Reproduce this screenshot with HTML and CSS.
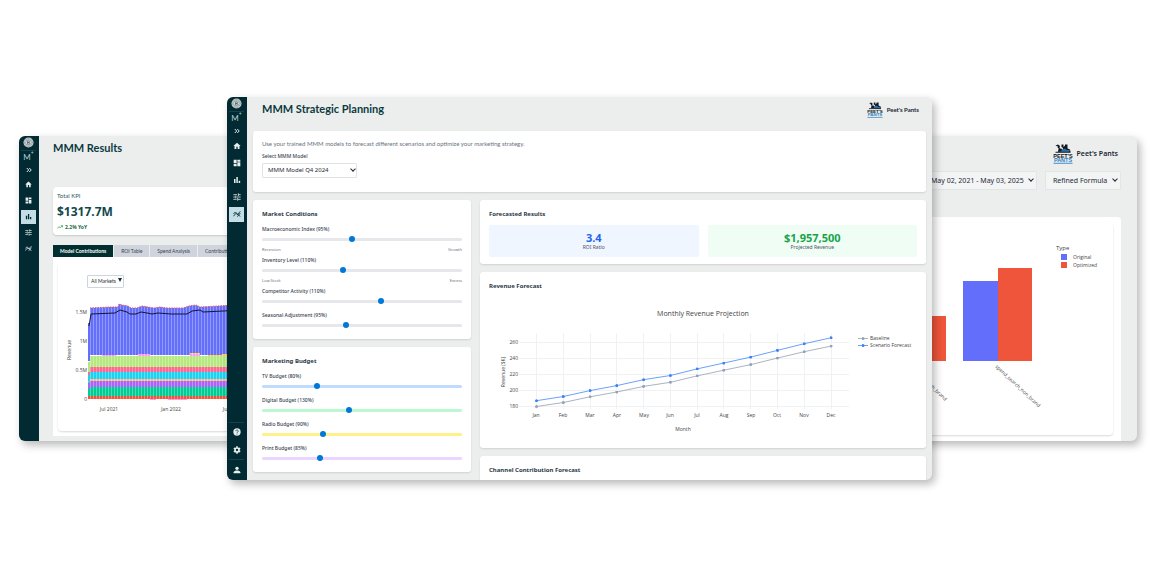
FILE: index.html
```html
<!DOCTYPE html>
<html lang="en">
<head>
    <meta charset="UTF-8">
    <meta name="viewport" content="width=device-width, initial-scale=1.0">
    <title>MMM Strategic Planning</title>
    <link rel="stylesheet" href="styles.css">
</head>
<body>
    <!-- shared icons -->
    <svg class="sprite" aria-hidden="true">
        <symbol id="brand" viewBox="0 0 24 24">
            <circle cx="12" cy="12" r="11" fill="#c9d3d3"/>
            <circle cx="12" cy="12" r="8.5" fill="none" stroke="#4d6468" stroke-width="1.2" stroke-dasharray="2 1.2"/>
            <circle cx="12" cy="12" r="5.8" fill="#e8eeee" stroke="#5b7074" stroke-width="1"/>
            <path d="M10 8.5h2.5a1.7 1.7 0 0 1 0 3.5H10zM10 12h3a1.8 1.8 0 0 1 0 3.6h-3z" fill="none" stroke="#33494e" stroke-width="1.4"/>
        </symbol>
        <symbol id="chevrons" viewBox="0 0 24 24">
            <path d="M3 4l8 8-8 8M13 4l8 8-8 8" fill="none" stroke="currentColor" stroke-width="4"/>
        </symbol>
        <symbol id="home" viewBox="0 0 24 24">
            <path d="M10 21v-7h4v7h5.500v-9H23L12 2 1 12h3.500v9z" fill="currentColor"/>
        </symbol>
        <symbol id="dashboard" viewBox="0 0 24 24">
            <path d="M2 2h9v11H2zM13 2h9v6h-9zM2 15h9v7H2zM13 10h9v12h-9z" fill="currentColor"/>
        </symbol>
        <symbol id="bars" viewBox="0 0 24 24">
            <path d="M3 9h4.500v12H3zM10 3h4.500v18H10zM17 14h4.500v7H17z" fill="currentColor"/>
        </symbol>
        <symbol id="tune" viewBox="0 0 24 24">
            <path d="M1 5h11M16 5h7M16 1v8M1 12h5M10 12h13M8 8v8M1 19h10M15 19h8M14 15v8" fill="none" stroke="currentColor" stroke-width="2.400"/>
        </symbol>
        <symbol id="trend" viewBox="0 0 24 24">
            <path d="M1 19l8-9 4 4 9-10M1 12l6-6 9 9 6 4M13 20l9-11" fill="none" stroke="currentColor" stroke-width="2.600"/>
        </symbol>
        <symbol id="help" viewBox="0 0 24 24">
            <circle cx="12" cy="12" r="11" fill="currentColor"/>
            <path d="M8.500 9.500a3.500 3.500 0 1 1 5.500 2.700c-1.300 1-2 1.500-2 3M12 17v2.500" fill="none" stroke="#012a33" stroke-width="2.200"/>
        </symbol>
        <symbol id="gear" viewBox="0 0 24 24">
            <circle cx="12" cy="12" r="6" fill="none" stroke="currentColor" stroke-width="5"/>
            <path d="M12 1v4M12 19v4M2.500 6.500l3.500 2M18 15.500l3.500 2M2.500 17.500l3.500-2M18 8.500l3.500-2" stroke="currentColor" stroke-width="5"/>
        </symbol>
        <symbol id="person" viewBox="0 0 24 24">
            <circle cx="12" cy="7" r="5" fill="currentColor"/>
            <path d="M2 22v-3c0-4 6-5.500 10-5.500s10 1.500 10 5.500v3z" fill="currentColor"/>
        </symbol>
        <symbol id="peets" viewBox="0 0 40 40">
            <path d="M5 3l5-2 4 3-1 4 3 2-2 1-3-2-2-2 1-2-3-1zM11 10l6-1 3 6-10 1zM17 1h4v5l3-3V1h5v8l5 2 1 5H20V8l-3-2z" fill="#101820"/>
            <path d="M17 11l7-2 4 3h5v4H17z" fill="#2b6ea8"/>
            <path d="M5 16.500h30" stroke="#101820" stroke-width="2"/>
            <text x="20" y="27" text-anchor="middle" class="logo-top">PEET'S</text>
            <text x="20" y="36" text-anchor="middle" class="logo-bottom">PANTS</text>
            <path d="M1 38.500h38" stroke="#3c8dcc" stroke-width="2"/>
        </symbol>
    </svg>

    <main class="stage">
        <!-- results window -->
        <section class="window window-left">
            <nav class="sidebar sidebar-small" aria-label="Results menu">
                <a href="#" class="brand" aria-label="Brand"><svg><use href="#brand"/></svg></a>
                <span class="monogram">M<sup>+</sup></span>
                <a href="#" class="expand" aria-label="Expand"><svg><use href="#chevrons"/></svg></a>
                <a href="#" class="item" aria-label="Home"><svg><use href="#home"/></svg></a>
                <a href="#" class="item" aria-label="Dashboard"><svg><use href="#dashboard"/></svg></a>
                <a href="#" class="item active" aria-label="Results"><svg><use href="#bars"/></svg></a>
                <a href="#" class="item" aria-label="Tuning"><svg><use href="#tune"/></svg></a>
                <a href="#" class="item" aria-label="Planning"><svg><use href="#trend"/></svg></a>
            </nav>
            <div class="results">
                <h2>MMM Results</h2>
                <div class="kpi">
                    <p class="kpi-name">Total KPI</p>
                    <p class="kpi-value">$1317.7M</p>
                    <p class="kpi-change">
                        <svg viewBox="0 0 24 14"><path d="M1 12l7-6 5 4 9-8M15 2h7v6" fill="none" stroke="#22a559" stroke-width="3"/></svg>
                        2.2% YoY
                    </p>
                </div>
                <div class="tabs">
                    <button class="tab selected">Model Contributions</button>
                    <button class="tab">ROI Table</button>
                    <button class="tab">Spend Analysis</button>
                    <button class="tab">Contribution</button>
                </div>
                <div class="panel">
                    <div class="inner">
                        <div class="select select-market">
                            <select aria-label="Market"><option>All Markets</option></select>
                        </div>
                        <svg class="stack-chart" viewBox="0 0 184 136">
                            <defs>
                                <pattern id="stripes" width="3" height="10" patternUnits="userSpaceOnUse">
                                    <rect x="2" width="1" height="10" fill="#fff" opacity="0.3"/>
                                </pattern>
                            </defs>
                            <g class="tick end">
                                <text x="29" y="23">1.5M</text>
                                <text x="29" y="52">1M</text>
                                <text x="29" y="81">0.5M</text>
                                <text x="29" y="110">0</text>
                            </g>
                            <text class="axis" transform="translate(13 59) rotate(-90)">Revenue</text>
                            <path fill="#636efa" d="M30 32h2V17l20-1 8 0 1-3 3 1 6 1 3 2h6l5-2 6 1 6 1 6-1 7 1h16l6-2 7-1 4 2 18-1 18-1v50H32v6h-2z"/>
                            <path fill="#ff97ff" d="M44 64h14v1.500H44zM80 63h12v2H80zM132 63h10v2h-10z"/>
                            <path fill="#fecb52" d="M132 62h10v1h-10zM150 64h34v1.500h-34zM164 63h20v1h-20z"/>
                            <path fill="#b6e880" d="M30 71h2v-6h152v11H32v5h-2z"/>
                            <path fill="#ff6692" d="M30 81h2v-5h152v5H32v3h-2z"/>
                            <path fill="#19d3f3" d="M30 84h2v-3h152v7H32v4h-2z"/>
                            <path fill="#ffa15a" opacity="0.750" d="M30 91h2v-3h152v2H30z"/>
                            <path fill="#ab63fa" d="M30 92h2v-2h152v6H32v2h-2z"/>
                            <path fill="#00cc96" d="M30 98h2v-2h152v9H30z"/>
                            <path fill="#ef553b" d="M30 105h154v3H30z"/>
                            <path fill="#ff97ff" d="M92 108h6v1h-6zM110 108h19v1h-19z"/>
                            <path fill="url(#stripes)" d="M32 13h152v95H32z"/>
                            <path fill="none" stroke="#e5566a" stroke-dasharray="1.500 1" d="M32 17l20-1h8l1-3 3 1 6 1 3 2h6l5-2 6 1 6 1 6-1 7 1h16l6-2 7-1 4 2 18-1 18-1"/>
                            <path fill="none" stroke="#15162e" d="M31 35l2-12 24-1 5-3 7 2 3 2h6l5-2 6 1 5 1 6-1 13 1h16l5-3 8-1 3 2 20-1 20-1"/>
                            <g class="tick">
                                <text x="51" y="120">Jul 2021</text>
                                <text x="113" y="120">Jan 2022</text>
                                <text x="174" y="120">Jul 2022</text>
                            </g>
                        </svg>
                    </div>
                </div>
            </div>
        </section>

        <!-- planning window -->
        <section class="window window-main">
            <nav class="sidebar" aria-label="Main menu">
                <a href="#" class="brand" aria-label="Brand"><svg><use href="#brand"/></svg></a>
                <span class="monogram">M<sup>+</sup></span>
                <a href="#" class="expand" aria-label="Expand"><svg><use href="#chevrons"/></svg></a>
                <a href="#" class="item" aria-label="Home"><svg><use href="#home"/></svg></a>
                <a href="#" class="item" aria-label="Dashboard"><svg><use href="#dashboard"/></svg></a>
                <a href="#" class="item" aria-label="Results"><svg><use href="#bars"/></svg></a>
                <a href="#" class="item" aria-label="Tuning"><svg><use href="#tune"/></svg></a>
                <a href="#" class="item active" aria-label="Planning"><svg><use href="#trend"/></svg></a>
                <div class="bottom">
                    <a href="#" class="item" aria-label="Help"><svg><use href="#help"/></svg></a>
                    <a href="#" class="item" aria-label="Settings"><svg><use href="#gear"/></svg></a>
                    <a href="#" class="item account" aria-label="Account"><svg><use href="#person"/></svg></a>
                </div>
            </nav>
            <div class="planning">
                <header class="topbar">
                    <h1>MMM Strategic Planning</h1>
                    <div class="client"><svg><use href="#peets"/></svg>Peet's Pants</div>
                </header>

                <div class="card intro">
                    <p>Use your trained MMM models to forecast different scenarios and optimize your marketing strategy.</p>
                    <label for="model">Select MMM Model</label>
                    <div class="select select-model">
                        <select id="model"><option>MMM Model Q4 2024</option></select>
                    </div>
                </div>

                <div class="columns">
                    <div class="column">
                        <div class="card">
                            <h3>Market Conditions</h3>
                            <div class="fields">
                                <div class="field">
                                    <label for="macro">Macroeconomic Index (95%)</label>
                                    <input type="range" id="macro" min="50" max="150" value="95">
                                    <div class="ends"><span>Recession</span><span>Growth</span></div>
                                </div>
                                <div class="field">
                                    <label for="inventory">Inventory Level (110%)</label>
                                    <input type="range" id="inventory" min="50" max="200" value="110">
                                    <div class="ends"><span>Low Stock</span><span>Excess</span></div>
                                </div>
                                <div class="field">
                                    <label for="competitor">Competitor Activity (110%)</label>
                                    <input type="range" id="competitor" min="50" max="150" value="110">
                                </div>
                                <div class="field">
                                    <label for="seasonal">Seasonal Adjustment (95%)</label>
                                    <input type="range" id="seasonal" min="70" max="130" value="95">
                                </div>
                            </div>
                        </div>
                        <div class="card">
                            <h3>Marketing Budget</h3>
                            <div class="fields">
                                <div class="field">
                                    <label for="tv">TV Budget (80%)</label>
                                    <input type="range" class="blue" id="tv" min="0" max="300" value="80">
                                </div>
                                <div class="field">
                                    <label for="digital">Digital Budget (130%)</label>
                                    <input type="range" class="green" id="digital" min="0" max="300" value="130">
                                </div>
                                <div class="field">
                                    <label for="radio">Radio Budget (90%)</label>
                                    <input type="range" class="yellow" id="radio" min="0" max="300" value="90">
                                </div>
                                <div class="field">
                                    <label for="print">Print Budget (85%)</label>
                                    <input type="range" class="purple" id="print" min="0" max="300" value="85">
                                </div>
                            </div>
                        </div>
                    </div>

                    <div class="column">
                        <div class="card">
                            <h3>Forecasted Results</h3>
                            <div class="stats">
                                <div class="stat stat-blue"><strong>3.4</strong><span>ROI Ratio</span></div>
                                <div class="stat stat-green"><strong>$1,957,500</strong><span>Projected Revenue</span></div>
                            </div>
                        </div>
                        <div class="card">
                            <h3>Revenue Forecast</h3>
                            <svg class="line-chart" viewBox="0 0 428 148">
                                <defs>
                                    <marker id="dot-gray" markerUnits="userSpaceOnUse" viewBox="0 0 4 4" markerWidth="3" markerHeight="3" refX="2" refY="2"><circle cx="2" cy="2" r="2" fill="#94a3b8"/></marker>
                                    <marker id="dot-blue" markerUnits="userSpaceOnUse" viewBox="0 0 4 4" markerWidth="3" markerHeight="3" refX="2" refY="2"><circle cx="2" cy="2" r="2" fill="#3b82f6"/></marker>
                                </defs>
                                <text class="chart-title" x="214" y="23">Monthly Revenue Projection</text>
                                <path class="grid" d="M30 49.500h330M30 65.500h330M30 81.500h330M30 97.500h330M30 113.500h330"/>
                                <path class="grid" d="M47.500 40v76M74.500 40v76M101.500 40v76M127.500 40v76M154.500 40v76M181.500 40v76M208.500 40v76M234.500 40v76M261.500 40v76M288.500 40v76M315.500 40v76M342.500 40v76"/>
                                <g class="tick end">
                                    <text x="29" y="51">260</text>
                                    <text x="29" y="67">240</text>
                                    <text x="29" y="83">220</text>
                                    <text x="29" y="99">200</text>
                                    <text x="29" y="115">180</text>
                                </g>
                                <g class="tick">
                                    <text x="47" y="124">Jan</text>
                                    <text x="74" y="124">Feb</text>
                                    <text x="101" y="124">Mar</text>
                                    <text x="128" y="124">Apr</text>
                                    <text x="155" y="124">May</text>
                                    <text x="181" y="124">Jun</text>
                                    <text x="208" y="124">Jul</text>
                                    <text x="235" y="124">Aug</text>
                                    <text x="262" y="124">Sep</text>
                                    <text x="288" y="124">Oct</text>
                                    <text x="315" y="124">Nov</text>
                                    <text x="342" y="124">Dec</text>
                                </g>
                                <text class="axis" x="194" y="138">Month</text>
                                <text class="axis" transform="translate(16 79) rotate(-90)">Revenue ($K)</text>
                                <polyline class="line-gray" points="47.5,113.5 74.3,109.5 101,103.8 127.8,99 154.6,93.4 181.4,89.3 208.1,82.9 234.9,77.2 261.7,71.6 288.4,65.1 315.2,58.7 342,53.1"/>
                                <polyline class="line-blue" points="47.5,107.7 74.3,103.5 101,97.6 127.8,92.6 154.6,86.7 181.4,82.5 208.1,75.9 234.9,70 261.7,64.1 288.4,57.4 315.2,50.7 342,44.8"/>
                                <polyline class="line-gray legend-line" points="369,45.5 374,45.5 379,45.5"/>
                                <polyline class="line-blue legend-line" points="369,52.5 374,52.5 379,52.5"/>
                                <g class="tick start">
                                    <text x="381" y="47">Baseline</text>
                                    <text x="381" y="54">Scenario Forecast</text>
                                </g>
                            </svg>
                        </div>
                        <div class="card cut">
                            <h3>Channel Contribution Forecast</h3>
                        </div>
                    </div>
                </div>
            </div>
        </section>

        <!-- optimization window -->
        <section class="window window-right">
            <div class="spend">
                <div class="client client-large"><svg><use href="#peets"/></svg>Peet's Pants</div>
                <div class="filters">
                    <div class="select select-filter">
                        <select aria-label="Date range"><option>May 02, 2021 - May 03, 2025</option></select>
                    </div>
                    <div class="select select-filter">
                        <select aria-label="Formula"><option>Refined Formula</option></select>
                    </div>
                </div>
                <div class="panel">
                    <div class="inner">
                        <svg class="bar-chart" viewBox="0 0 192 208">
                            <path fill="#ef553b" d="M0 91h25v45H0zM77 43h34v93H77z"/>
                            <path fill="#636efa" d="M42 56h35v80H42z"/>
                            <text class="legend-title" x="135" y="25">Type</text>
                            <path fill="#636efa" d="M140 29h6v6h-6z"/>
                            <path fill="#ef553b" d="M140 37h6v6h-6z"/>
                            <g class="tick start">
                                <text x="152" y="34">Original</text>
                                <text x="152" y="42">Optimized</text>
                                <text transform="translate(74 142) rotate(43)" class="long">spend_search_non_brand</text>
                            </g>
                            <text class="tick end" transform="translate(24 176) rotate(43)">spend_search_brand</text>
                        </svg>
                    </div>
                </div>
            </div>
        </section>
    </main>
</body>
</html>
```
FILE: styles.css
```css
* {
    box-sizing: border-box;
}
body {
    margin: 0;
    background: #fff;
    font-family: "Noto Sans", "Open Sans", sans-serif;
    font-size: 6px;
    line-height: 9px;
    color: #374151;
}
h1, h2, h3, p {
    margin: 0;
}
a {
    color: inherit;
}
select, button, input {
    font: inherit;
    color: inherit;
}
.sprite {
    display: none;
}

/* three windows, the middle one on top of its neighbours */
.stage {
    display: grid;
    grid-template-columns: 208fr 705fr 205fr;
    align-items: center;
    min-height: 100vh;
    padding: 0 15px 0 19px;
}
.window {
    display: flex;
    min-width: 0;
    overflow: hidden;
    background: #ebeeed;
    border-radius: 6px;
    box-shadow: 3px 4px 8px rgba(0, 0, 0, 0.28);
}
.window-left {
    margin-right: -12px;
}
.window-main {
    z-index: 1;
}
.window-right {
    margin-left: -12px;
}

/* sidebar */
.sidebar {
    display: flex;
    flex-direction: column;
    align-items: center;
    flex: 0 0 20px;
    padding-right: 1px;
    background: #012a33;
    color: #e6eeee;
}
.sidebar svg {
    display: block;
    width: 8px;
    height: 8px;
}
.brand, .monogram, .expand, .item {
    display: flex;
    align-items: center;
    justify-content: center;
    width: 15px;
    height: 14px;
}
.sidebar .brand svg {
    width: 11px;
    height: 11px;
}
.monogram {
    border-top: 1px solid #17424b;
    font: 8px/13px Lato, sans-serif;
    color: #b4d3d8;
}
.monogram sup {
    font-size: 5px;
    line-height: 5px;
    align-self: flex-start;
}
.expand {
    height: 13px;
}
.expand svg {
    width: 6px;
    height: 6px;
}
.item {
    height: 17px;
}
.item.active {
    height: 15px;
    margin: 1px 0;
    background: #c3dfe5;
    color: #012a33;
}
.sidebar-small .item {
    height: 16px;
}
.sidebar-small .item svg {
    width: 7px;
    height: 7px;
}
.sidebar-small .item.active {
    height: 14px;
}
.bottom {
    margin-top: auto;
    border-top: 1px solid #17424b;
}
.bottom .item {
    height: 18px;
}
.bottom .account {
    height: 21px;
    border-top: 1px solid #17424b;
}

/* headings */
h1, h2 {
    font: bold 11px/16px Lato, sans-serif;
    color: #0c3a3f;
}
h3 {
    margin-bottom: 4px;
    font-size: 6px;
    font-weight: bold;
    line-height: 13px;
    color: #2a3948;
}
.client {
    display: flex;
    align-items: center;
    gap: 4px;
    font-family: Lato, sans-serif;
    font-weight: bold;
    color: #1c2530;
}
.client svg {
    width: 16px;
    height: 16px;
}
.logo-top, .logo-bottom {
    font: bold 11px "Liberation Sans", sans-serif;
    fill: #101820;
}
.logo-bottom {
    fill: #2f80c2;
}

/* planning */
.planning {
    flex: 1;
    min-width: 0;
    padding: 0 6px;
}
.topbar {
    display: flex;
    align-items: flex-start;
    justify-content: space-between;
    height: 34px;
    padding: 4px 7px 0 9px;
}
.topbar .client {
    padding-top: 1px;
}
.card {
    padding: 8px 9px 7px;
    background: #fff;
    border-radius: 3px;
    box-shadow: 0 1px 2px rgba(0, 0, 0, 0.12);
}
.card.cut {
    padding-bottom: 0;
    border-radius: 3px 3px 0 0;
}
.cut h3 {
    margin-bottom: 3px;
}
.card.intro {
    margin-bottom: 8px;
    padding-bottom: 14px;
}
.intro p {
    margin-bottom: 4px;
    font-family: Lato, sans-serif;
    color: #6b7280;
}
.intro label {
    margin-bottom: 2px;
}
label {
    display: block;
    font-size: 5px;
    font-weight: 500;
}
.columns {
    display: grid;
    grid-template-columns: 218fr 446fr;
    gap: 9px;
}
.column {
    display: flex;
    flex-direction: column;
    gap: 8px;
    min-width: 0;
}
.fields {
    display: flex;
    flex-direction: column;
    gap: 3px;
}
.ends {
    display: flex;
    justify-content: space-between;
    font-size: 4px;
    line-height: 7px;
    color: #6b7280;
}

/* sliders */
input[type="range"] {
    display: block;
    width: 100%;
    height: 12px;
    margin: 0;
    appearance: none;
    background: none;
    --track: #e5e7eb;
}
input[type="range"]::-webkit-slider-runnable-track {
    height: 3px;
    border-radius: 2px;
    background: var(--track);
}
input[type="range"]::-webkit-slider-thumb {
    width: 6px;
    height: 6px;
    margin-top: -2px;
    appearance: none;
    border-radius: 50%;
    background: #0078d7;
}
input.blue {
    --track: #bfdbfe;
}
input.green {
    --track: #bbf7d0;
}
input.yellow {
    --track: #fef08a;
}
input.purple {
    --track: #e9d5ff;
}

/* drop-downs */
.select {
    position: relative;
}
.select select {
    display: block;
    width: 100%;
    appearance: none;
    border: 1px solid #e0e3e6;
    border-radius: 1px;
    background: #fff;
    color: #1f2937;
}
.select::after {
    content: "";
    position: absolute;
    top: 50%;
    right: 4px;
    width: 3px;
    height: 3px;
    margin-top: -3px;
    border: solid #1f2937;
    border-width: 0 1px 1px 0;
    transform: rotate(45deg);
}
.select-model {
    width: 95px;
}
.select-model::after {
    right: 2px;
}
.select-model select {
    height: 15px;
    padding: 0 5px;
}
.select-market {
    width: 37px;
    margin: 0 0 3px 29px;
}
.select-market select {
    height: 13px;
    padding: 0 3px;
    border-color: #cdd5e0;
    font: 5px Lato, sans-serif;
}
.select-market::after {
    width: 0;
    height: 0;
    right: 2px;
    border: solid transparent;
    border-width: 4px 2px 0 2px;
    border-top-color: #1f2937;
    transform: none;
}

/* forecast numbers */
.stats {
    display: grid;
    grid-template-columns: 1fr 1fr;
    gap: 9px;
}
.stat {
    display: flex;
    flex-direction: column;
    align-items: center;
    height: 32px;
    padding-top: 7px;
    border-radius: 2px;
    font-size: 5px;
    color: #4b5563;
}
.stat strong {
    font-size: 11px;
    line-height: 12px;
}
.stat-blue {
    background: #eff6ff;
}
.stat-blue strong {
    color: #2563eb;
}
.stat-green {
    background: #f0fdf4;
}
.stat-green strong {
    color: #16a34a;
}
.stat span {
    line-height: 7px;
}

/* charts */
.line-chart {
    display: block;
    width: 100%;
    margin-top: -4px;
}
svg text {
    font-family: "Open Sans", "DejaVu Sans", sans-serif;
}
.grid {
    fill: none;
    stroke: #f0f1f3;
}
.tick {
    font-size: 5px;
    fill: #444;
    text-anchor: middle;
}
.tick.end {
    text-anchor: end;
}
.tick.start {
    text-anchor: start;
}
.axis {
    font-size: 5px;
    fill: #444;
    text-anchor: middle;
}
.chart-title {
    font-size: 7px;
    fill: #444;
    text-anchor: middle;
}
.line-gray, .line-blue {
    fill: none;
    stroke: #a9b4c4;
    marker: url(#dot-gray);
}
.line-blue {
    stroke: #6ba2f9;
    marker: url(#dot-blue);
}
.legend-line {
    marker-start: none;
    marker-end: none;
}

/* results */
.results {
    flex: 1;
    min-width: 0;
    padding: 4px 0 5px 14px;
}
.kpi {
    margin: 31px 0 10px;
    padding: 3px 4px 4px;
    background: #fff;
    border-radius: 4px 0 0 4px;
    box-shadow: 0 1px 2px rgba(0, 0, 0, 0.15);
}
.kpi-name {
    font-family: Lato, sans-serif;
    line-height: 11px;
    color: #2f5d62;
}
.kpi-value {
    font-size: 12px;
    font-weight: bold;
    line-height: 22px;
    color: #12484c;
}
.kpi-change {
    display: flex;
    align-items: center;
    gap: 2px;
    font-size: 5px;
    font-weight: bold;
    line-height: 8px;
    color: #1c6b45;
}
.kpi-change svg {
    width: 6px;
    height: 4px;
}
.tabs {
    display: flex;
    gap: 1px;
}
.tab {
    flex: none;
    height: 12px;
    padding: 0 7px;
    border: none;
    background: #d0d4dc;
    font: 5px/12px Lato, sans-serif;
    color: #374151;
    cursor: pointer;
}
.tab.selected {
    background: #012f2f;
    color: #fff;
    font-weight: bold;
}
.panel {
    padding: 6px 8px 6px 5px;
    background: #fff;
}
.inner {
    overflow: hidden;
    border-radius: 4px;
    box-shadow: 0 1px 2px rgba(0, 0, 0, 0.15);
}
.results .panel {
    padding: 6px 0 5px 5px;
}
.results .inner {
    padding: 12px 0 4px;
}
.stack-chart {
    display: block;
    width: 184px;
}

/* optimization */
.spend {
    flex: 1;
    min-width: 0;
    padding: 8px 16px 0 0;
}
.client-large {
    justify-content: flex-end;
    padding-right: 3px;
    font-family: "Noto Sans", sans-serif;
    font-size: 7px;
    font-weight: 600;
}
.client-large svg {
    width: 20px;
    height: 20px;
}
.filters {
    display: flex;
    justify-content: flex-end;
    gap: 8px;
    margin: 7px 0 27px;
}
.select-filter select {
    height: 19px;
    padding: 0 12px 0 7px;
    background: #f3f4f4;
    border-color: #e2e5e6;
    font-size: 7px;
}
.spend .panel {
    padding-left: 0;
    border-radius: 0 4px 0 0;
}
.bar-chart {
    display: block;
    float: right;
    width: 192px;
    height: 212px;
}
.legend-title {
    font-size: 6px;
    fill: #444;
}
```
